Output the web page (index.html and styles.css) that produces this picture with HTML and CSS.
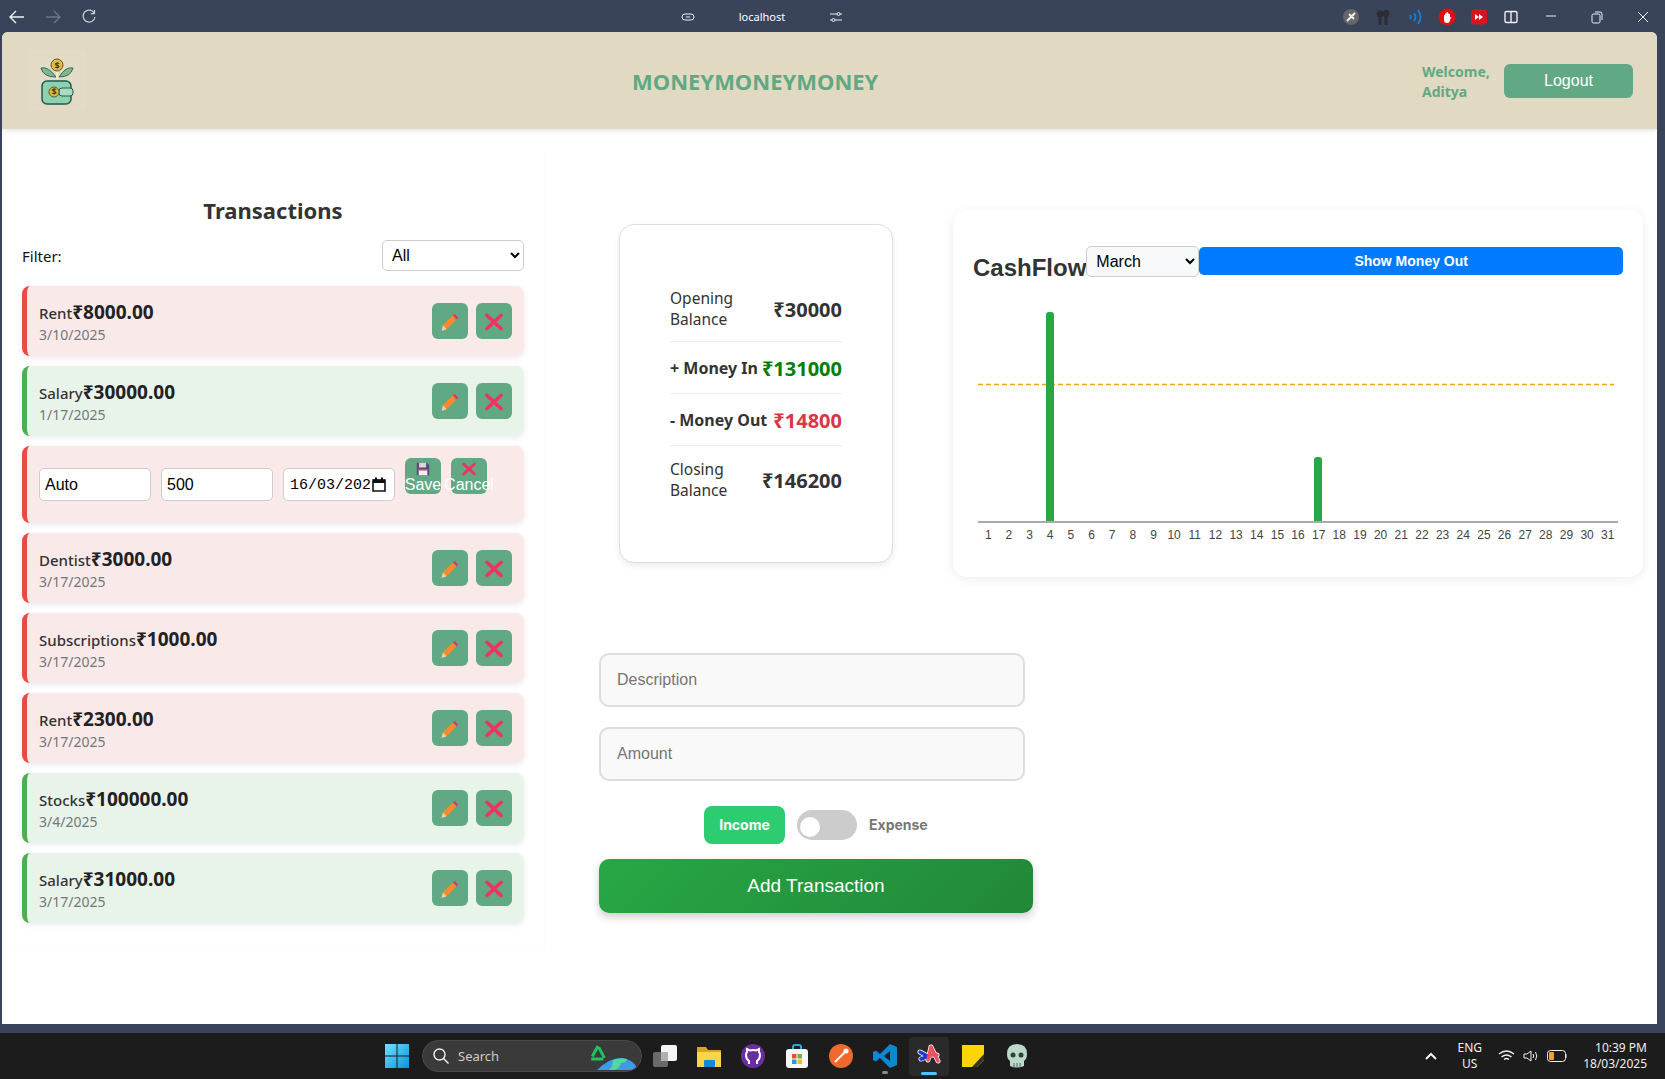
FILE: index.html
```html
<!DOCTYPE html>
<html>
    <head>
        <meta charset="utf-8">
        <title>MONEYMONEYMONEY</title>
        <link rel="stylesheet" href="styles.css">
    </head>
    <body>
        <div class="chrome">
            <div class="nav-btns">
                <svg width="20" height="20" viewBox="0 0 20 20" class="line-icon"><path d="M17 10H3M9 4l-6 6 6 6"/></svg>
                <svg width="20" height="20" viewBox="0 0 20 20" class="line-icon dim"><path d="M3 10h14M11 4l6 6-6 6"/></svg>
                <svg width="20" height="20" viewBox="0 0 20 20" class="line-icon soft"><path d="M15.500 6.500A6 6 0 1 0 16 10M15.500 3v3.700h-3.700"/></svg>
            </div>
            <div class="address">
                <svg width="16" height="16" viewBox="0 0 16 16" class="line-icon thin"><rect x="2" y="5" width="12" height="6" rx="3"/><path d="M6 8h4"/></svg>
                <span class="address-text">localhost</span>
                <svg width="16" height="16" viewBox="0 0 16 16" class="line-icon thin"><path d="M2 5h7M12 5h2M2 11h2M7 11h7"/><circle cx="10.500" cy="5" r="1.500"/><circle cx="5.500" cy="11" r="1.500"/></svg>
            </div>
            <div class="ext-icons">
                <svg width="18" height="18" viewBox="0 0 18 18"><circle cx="9" cy="9" r="8" fill="#666"/><path d="M5 13l8-8M7 6l5 5" stroke="#eee" stroke-width="2"/></svg>
                <svg width="18" height="18" viewBox="0 0 18 18"><circle cx="6" cy="6" r="3.500" fill="#2a2d33"/><circle cx="12" cy="5.500" r="3.500" fill="#2a2d33"/><rect x="4.500" y="8" width="3" height="9" fill="#2a2d33"/><rect x="10.500" y="8" width="3" height="9" fill="#2a2d33"/></svg>
                <svg width="18" height="18" viewBox="0 0 18 18" fill="none" stroke="#0a84e8" stroke-width="1.800"><path d="M4 7q1.500 2 0 4M8 5q3 4 0 8M12 2q5 7 0 14"/></svg>
                <svg width="18" height="18" viewBox="0 0 18 18"><circle cx="9" cy="9" r="8.500" fill="#e01010"/><path d="M6 7v5q0 3 3 3t3-3l1.500-3-1.500.5V6h-1v-.5H10V4H8.500v1.500H7V7z" fill="#fff"/></svg>
                <svg width="18" height="18" viewBox="0 0 18 18"><rect x="1" y="1.500" width="16" height="15" rx="3" fill="#d8141c"/><path d="M5 6l4 3-4 3zM9 6l4 3-4 3z" fill="#fff"/></svg>
                <svg width="18" height="18" viewBox="0 0 18 18" class="line-icon"><rect x="3" y="3.500" width="12" height="11" rx="1.500"/><path d="M9 3.500v11"/></svg>
            </div>
            <div class="window-btns">
                <svg width="14" height="14" viewBox="0 0 14 14" class="line-icon thin"><path d="M2 6h10"/></svg>
                <svg width="14" height="14" viewBox="0 0 14 14" class="line-icon thin"><rect x="2" y="4" width="8" height="9" rx="1.500"/><path d="M5 2h5q2 0 2 2v6"/></svg>
                <svg width="14" height="14" viewBox="0 0 14 14" class="line-icon thin"><path d="M2 2l10 10M12 2L2 12"/></svg>
            </div>
        </div>

        <div class="page">
            <header class="app-header">
                <div class="logo">
                    <svg width="36" height="52" viewBox="0 0 36 52">
                        <path d="M17 22Q9 11 2 13q2 9 15 9z" fill="#7fb98f" stroke="#2f6b5b" stroke-width="1"/>
                        <path d="M20 22Q27 11 34 13q-2 9-14 9z" fill="#7fb98f" stroke="#2f6b5b" stroke-width="1"/>
                        <path d="M18 14v10" stroke="#f3ead2" stroke-width="2"/>
                        <circle cx="18" cy="10" r="6" fill="#e6b93f" stroke="#5a5a3a"/>
                        <text x="18" y="13.500" class="logo-dollar">$</text>
                        <rect x="3" y="26" width="29" height="23" rx="5" fill="#8ed1ae" stroke="#1f5a52" stroke-width="1.500"/>
                        <rect x="20" y="33" width="14" height="8" rx="3" fill="#a9dcc0" stroke="#1f5a52"/>
                        <circle cx="15" cy="37" r="5" fill="#e6b93f" stroke="#5a5a3a"/>
                        <text x="15" y="40" class="logo-dollar">$</text>
                    </svg>
                </div>
                <h1 class="app-title">MONEYMONEYMONEY</h1>
                <div class="user-box">
                    <span class="welcome">Welcome, Aditya</span>
                    <button class="logout-btn" type="button">Logout</button>
                </div>
            </header>

            <main class="main">
                <section class="tx-panel">
                    <h2 class="tx-heading">Transactions</h2>
                    <div class="filter-row">
                        <label>Filter:</label>
                        <select class="filter-select"><option>All</option></select>
                    </div>
                    <ul class="tx-list">
                        <li class="tx expense">
                            <div class="tx-info">
                                <div class="tx-top"><span class="tx-name">Rent</span><span class="tx-amount">₹8000.00</span></div>
                                <div class="tx-date">3/10/2025</div>
                            </div>
                            <div class="tx-actions">
                                <button class="icon-btn" type="button"><svg width="20" height="20"><use href="#pencil"/></svg></button>
                                <button class="icon-btn" type="button"><svg width="18" height="18"><use href="#cross"/></svg></button>
                            </div>
                        </li>
                        <li class="tx income">
                            <div class="tx-info">
                                <div class="tx-top"><span class="tx-name">Salary</span><span class="tx-amount">₹30000.00</span></div>
                                <div class="tx-date">1/17/2025</div>
                            </div>
                            <div class="tx-actions">
                                <button class="icon-btn" type="button"><svg width="20" height="20"><use href="#pencil"/></svg></button>
                                <button class="icon-btn" type="button"><svg width="18" height="18"><use href="#cross"/></svg></button>
                            </div>
                        </li>
                        <li class="tx expense editing">
                            <input class="edit-input" type="text" value="Auto">
                            <input class="edit-input" type="text" value="500">
                            <div class="edit-input date-input"><span class="date-text">16/03/2025</span><svg width="14" height="15" viewBox="0 0 14 15"><path d="M1 3h12v11H1z" fill="none" stroke="#111" stroke-width="1.600"/><path d="M1 2.500h12V6H1zM3 .5h2v2H3zM9 .5h2v2H9z" fill="#111"/></svg></div>
                            <button class="icon-btn stacked" type="button"><svg width="18" height="18" viewBox="0 0 18 18"><path d="M1 1h13l3 3v13H1z" fill="#5b4a80"/><rect x="4" y="1" width="9" height="6" fill="#d9d6e0"/><rect x="3.500" y="9" width="11" height="8" fill="#f2f2f2"/><rect x="3.500" y="9" width="11" height="2" fill="#f03a5f"/></svg><span>Save</span></button>
                            <button class="icon-btn stacked" type="button"><svg width="18" height="18"><use href="#cross"/></svg><span>Cancel</span></button>
                        </li>
                        <li class="tx expense">
                            <div class="tx-info">
                                <div class="tx-top"><span class="tx-name">Dentist</span><span class="tx-amount">₹3000.00</span></div>
                                <div class="tx-date">3/17/2025</div>
                            </div>
                            <div class="tx-actions">
                                <button class="icon-btn" type="button"><svg width="20" height="20"><use href="#pencil"/></svg></button>
                                <button class="icon-btn" type="button"><svg width="18" height="18"><use href="#cross"/></svg></button>
                            </div>
                        </li>
                        <li class="tx expense">
                            <div class="tx-info">
                                <div class="tx-top"><span class="tx-name">Subscriptions</span><span class="tx-amount">₹1000.00</span></div>
                                <div class="tx-date">3/17/2025</div>
                            </div>
                            <div class="tx-actions">
                                <button class="icon-btn" type="button"><svg width="20" height="20"><use href="#pencil"/></svg></button>
                                <button class="icon-btn" type="button"><svg width="18" height="18"><use href="#cross"/></svg></button>
                            </div>
                        </li>
                        <li class="tx expense">
                            <div class="tx-info">
                                <div class="tx-top"><span class="tx-name">Rent</span><span class="tx-amount">₹2300.00</span></div>
                                <div class="tx-date">3/17/2025</div>
                            </div>
                            <div class="tx-actions">
                                <button class="icon-btn" type="button"><svg width="20" height="20"><use href="#pencil"/></svg></button>
                                <button class="icon-btn" type="button"><svg width="18" height="18"><use href="#cross"/></svg></button>
                            </div>
                        </li>
                        <li class="tx income">
                            <div class="tx-info">
                                <div class="tx-top"><span class="tx-name">Stocks</span><span class="tx-amount">₹100000.00</span></div>
                                <div class="tx-date">3/4/2025</div>
                            </div>
                            <div class="tx-actions">
                                <button class="icon-btn" type="button"><svg width="20" height="20"><use href="#pencil"/></svg></button>
                                <button class="icon-btn" type="button"><svg width="18" height="18"><use href="#cross"/></svg></button>
                            </div>
                        </li>
                        <li class="tx income">
                            <div class="tx-info">
                                <div class="tx-top"><span class="tx-name">Salary</span><span class="tx-amount">₹31000.00</span></div>
                                <div class="tx-date">3/17/2025</div>
                            </div>
                            <div class="tx-actions">
                                <button class="icon-btn" type="button"><svg width="20" height="20"><use href="#pencil"/></svg></button>
                                <button class="icon-btn" type="button"><svg width="18" height="18"><use href="#cross"/></svg></button>
                            </div>
                        </li>
                    </ul>
                </section>

                <section class="dash">
                    <div class="summary">
                        <div class="sum-row"><span class="sum-label">Opening Balance</span><span class="sum-value">₹30000</span></div>
                        <div class="sum-row"><span class="sum-label strong">+ Money In</span><span class="sum-value green">₹131000</span></div>
                        <div class="sum-row"><span class="sum-label strong">- Money Out</span><span class="sum-value red">₹14800</span></div>
                        <div class="sum-row"><span class="sum-label">Closing Balance</span><span class="sum-value">₹146200</span></div>
                    </div>

                    <div class="cash-card">
                        <div class="cash-head">
                            <h3 class="cash-title">CashFlow</h3>
                            <select class="month-select"><option>March</option></select>
                            <button class="show-btn" type="button">Show Money Out</button>
                        </div>
                        <svg class="chart" width="650" height="250" viewBox="0 0 650 250">
                            <line x1="5" y1="84.500" x2="641" y2="84.500" stroke="#ffa000" stroke-width="1.500" stroke-dasharray="5 3"/>
                            <path d="M73 222V15a3 3 0 0 1 3-3h2a3 3 0 0 1 3 3v207z" fill="#28a745"/>
                            <path d="M341 222V160a3 3 0 0 1 3-3h2a3 3 0 0 1 3 3v62z" fill="#28a745"/>
                            <rect x="5" y="221" width="640" height="2" fill="#aaa"/>
                            <g class="chart-labels">
                                <text x="15.300" y="239">1</text><text x="35.900" y="239">2</text><text x="56.600" y="239">3</text><text x="77.200" y="239">4</text><text x="97.900" y="239">5</text><text x="118.500" y="239">6</text><text x="139.200" y="239">7</text><text x="159.800" y="239">8</text><text x="180.500" y="239">9</text><text x="201.100" y="239">10</text><text x="221.800" y="239">11</text><text x="242.400" y="239">12</text><text x="263.100" y="239">13</text><text x="283.700" y="239">14</text><text x="304.400" y="239">15</text><text x="325" y="239">16</text><text x="345.700" y="239">17</text><text x="366.300" y="239">18</text><text x="387" y="239">19</text><text x="407.600" y="239">20</text><text x="428.300" y="239">21</text><text x="448.900" y="239">22</text><text x="469.600" y="239">23</text><text x="490.200" y="239">24</text><text x="510.900" y="239">25</text><text x="531.500" y="239">26</text><text x="552.200" y="239">27</text><text x="572.800" y="239">28</text><text x="593.500" y="239">29</text><text x="614.100" y="239">30</text><text x="634.800" y="239">31</text>
                            </g>
                        </svg>
                    </div>

                    <form class="add-form">
                        <input class="add-input" type="text" placeholder="Description">
                        <input class="add-input" type="text" placeholder="Amount">
                        <div class="type-row">
                            <span class="type-on">Income</span>
                            <span class="toggle"><span class="knob"></span></span>
                            <span class="type-off">Expense</span>
                        </div>
                        <button class="add-btn" type="button">Add Transaction</button>
                    </form>
                </section>
            </main>
        </div>

        <footer class="taskbar">
            <div class="task-center">
                <svg width="24" height="24" viewBox="0 0 24 24"><defs><linearGradient id="win" x1="0" y1="0" x2="1" y2="1"><stop offset="0" stop-color="#6fe0fa"/><stop offset="1" stop-color="#0b94dc"/></linearGradient></defs><path d="M0 0h11.500v11.500H0zM12.500 0H24v11.500H12.500zM0 12.500h11.500V24H0zM12.500 12.500H24V24H12.500z" fill="url(#win)"/></svg>
                <div class="search">
                    <svg width="18" height="18" viewBox="0 0 18 18" class="line-icon"><circle cx="7.500" cy="7.500" r="5.500"/><path d="M11.500 11.500l5 5"/></svg>
                    <span class="search-text">Search</span>
                    <svg class="search-art" width="48" height="26" viewBox="0 0 48 26"><path d="M9 2L2 15h14z" fill="none" stroke="#1ec45f" stroke-width="3" stroke-linejoin="round" stroke-dasharray="12 3"/><path d="M8 26Q20 14 32 14q12 1 16 10l-1 2z" fill="#3f9be8"/><path d="M24 16q8-3 14-1-1 4-6 4-1 5-6 7h-6q4-4 4-10z" fill="#4fd8a0"/></svg>
                </div>
                <svg width="24" height="24" viewBox="0 0 24 24"><rect x="0" y="8" width="15" height="15" rx="2" fill="#6a6a6a"/><rect x="8" y="1" width="16" height="16" rx="2" fill="#f4f4f4"/><rect x="8" y="8" width="7" height="9" fill="#b0b0b0"/></svg>
                <svg width="24" height="24" viewBox="0 0 24 24"><path d="M0 3h9l2 3h13v17H0z" fill="#d9a520"/><path d="M0 8h24v15H0z" fill="#fbd34d"/><rect x="7" y="16" width="11" height="7" rx="1" fill="#1588d8"/></svg>
                <svg width="24" height="24" viewBox="0 0 24 24"><circle cx="12" cy="12" r="12" fill="#6b2ea0"/><path d="M8 20v-3q-3-2-3-6 0-2 1-3V5l3 1.500q3-.8 6 0L18 5v3q1 1 1 3 0 4-3 6v3" fill="none" stroke="#fff" stroke-width="2"/></svg>
                <svg width="24" height="24" viewBox="0 0 24 24"><path d="M8 6V3q0-2 2-2h4q2 0 2 2v3" fill="none" stroke="#29a8e0" stroke-width="2"/><rect x="1" y="5" width="22" height="19" rx="3" fill="#f7f7f7"/><rect x="7" y="10" width="4.500" height="4.500" fill="#e8502a"/><rect x="12.500" y="10" width="4.500" height="4.500" fill="#6cb33f"/><rect x="7" y="15.500" width="4.500" height="4.500" fill="#1a9fe0"/><rect x="12.500" y="15.500" width="4.500" height="4.500" fill="#fbb914"/></svg>
                <svg width="24" height="24" viewBox="0 0 24 24"><circle cx="12" cy="12" r="12" fill="#f0682c"/><path d="M6 18L16 8" stroke="#fff" stroke-width="2"/><circle cx="17" cy="7" r="2.500" fill="#fff"/></svg>
                <div class="vs-slot">
                    <svg width="24" height="24" viewBox="0 0 24 24"><path d="M17 0l7 3v18l-7 3-10-10-4 3.500L0 16v-8l3-1.500L7 10zM17 7l-6 5 6 5z" fill="#0f87d0"/></svg>
                    <span class="vs-dot"></span>
                </div>
                <div class="active-app">
                    <svg width="24" height="20" viewBox="0 0 24 20">
                        <path d="M3 8l9 5M4 15l8-3M14 3l-3 13M14 3l7 14M13 11h7" fill="none" stroke="#fff" stroke-width="5" stroke-linecap="round"/>
                        <path d="M3 8l9 5M4 15l8-3" fill="none" stroke="#1c38d8" stroke-width="3.500" stroke-linecap="round"/>
                        <path d="M14 3l-3 13M14 3l7 14M13 11h7" fill="none" stroke="#f0505e" stroke-width="3.500" stroke-linecap="round"/>
                    </svg>
                    <span class="active-bar"></span>
                </div>
                <svg width="24" height="24" viewBox="0 0 24 24"><path d="M1 1h22v15l-7 7H1z" fill="#fdd500"/><path d="M23 10v6l-7 7h-5z" fill="#3c3420"/></svg>
                <svg class="skull" width="20" height="24" viewBox="0 0 20 24"><path d="M10 0q10 0 10 10 0 5-3 7v5q-7 3-14 0v-5q-3-2-3-7Q0 0 10 0z" fill="#bcd8c8"/><circle cx="6" cy="11" r="2.500" fill="#2c4438"/><circle cx="14" cy="11" r="2.500" fill="#2c4438"/><path d="M7 19v4M10 19v4M13 19v4" stroke="#4a6a58"/></svg>
            </div>
            <div class="tray">
                <svg width="12" height="8" viewBox="0 0 12 8" class="line-icon thick"><path d="M1 7l5-5 5 5"/></svg>
                <div class="lang">ENG<br>US</div>
                <svg width="17" height="14" viewBox="0 0 17 14" class="line-icon"><path d="M1 5q7.500-6 15 0M3.500 8q5-4 10 0M6 10.500q2.500-2 5 0"/></svg>
                <svg width="16" height="14" viewBox="0 0 16 14" class="line-icon thin"><path d="M1 5h3l4-3v10l-4-3H1zM10 5q1.500 2 0 4M12.500 3q2.500 4 0 8"/></svg>
                <svg width="20" height="12" viewBox="0 0 20 12"><rect x=".5" y=".5" width="18" height="11" rx="3" fill="none" stroke="#eee"/><rect x="2" y="2" width="5" height="8" rx="1" fill="#f2a51a"/><path d="M19 4v4" stroke="#eee"/></svg>
                <div class="clock">10:39 PM<br>18/03/2025</div>
            </div>
        </footer>

        <svg class="sprites" width="0" height="0">
            <symbol id="pencil" viewBox="0 0 18 18">
                <path d="M13 1.500l3.500 3.500-1.500 1.500L11.500 3z" fill="#f4305f"/>
                <path d="M11 3.500L14.500 7 6 15.500 2.500 12z" fill="#ff8a2b"/>
                <path d="M2.500 12L6 15.500 1.500 17z" fill="#f6cf9a"/>
            </symbol>
            <symbol id="cross" viewBox="0 0 18 18">
                <path d="M2 2.500l14 13M16 2.500l-14 13" stroke="#f4305f" stroke-width="3.600" stroke-linecap="round" fill="none"/>
            </symbol>
        </svg>
    </body>
</html>
```

FILE: styles.css
```css
*{
    box-sizing: border-box;
}
html,body{
    margin: 0;
    height: 1079px;
    overflow: hidden;
}
body{
    background-color: #39445a;
    display: flex;
    flex-direction: column;
    font-family: "Noto Sans", "Open Sans", sans-serif;
}
.line-icon{
    fill: none;
    stroke: #eef0f3;
    stroke-width: 1.4;
}
.line-icon.thin{
    stroke-width: 1;
}
.line-icon.thick{
    stroke-width: 2;
}
.line-icon.soft{
    stroke: #c9ced6;
    stroke-width: 1.2;
}
.line-icon.dim{
    stroke: #6d7686;
}

/* browser bar */
.chrome{
    height: 32px;
    flex: none;
    display: flex;
    align-items: center;
    padding: 1px 0 0 7px;
    color: #fff;
}
.nav-btns{
    display: flex;
    gap: 16px;
}
.address{
    display: flex;
    align-items: center;
    margin-left: 581px;
    width: 164px;
    justify-content: space-between;
}
.address-text{
    font-size: 11px;
}
.ext-icons{
    display: flex;
    gap: 14px;
    margin-left: 498px;
}
.window-btns{
    display: flex;
    gap: 32px;
    margin-left: 24px;
}

/* page */
.page{
    height: 992px;
    flex: none;
    margin: 0 8px 0 2px;
    background-color: #fff;
    border-radius: 6px 6px 0 0;
    overflow: hidden;
}
.app-header{
    height: 97px;
    background-color: #e1d9c1;
    box-shadow: 0 2px 5px rgba(0,0,0,0.1);
    display: flex;
    align-items: center;
    justify-content: space-between;
    padding: 0 24px 0 26px;
    position: relative;
}
.logo{
    width: 58px;
    height: 60px;
    margin-top: -2px;
    background-color: #e4dbc6;
    display: flex;
    align-items: center;
    justify-content: center;
    padding-top: 2px;
}
.logo-dollar{
    font-size: 9px;
    font-weight: 700;
    text-anchor: middle;
    fill: #3c3c20;
}
.app-title{
    margin: 0;
    font-size: 22px;
    font-weight: 700;
    color: #60a984;
    width: 244px;
    white-space: nowrap;
}
.user-box{
    display: flex;
    align-items: center;
    gap: 16px;
    margin-top: 1px;
}
.welcome{
    width: 66px;
    margin-top: 2px;
    font-size: 14px;
    font-weight: 700;
    line-height: 20px;
    color: #60a984;
}
.logout-btn{
    width: 129px;
    height: 34px;
    border: none;
    border-radius: 6px;
    background-color: #60a984;
    color: #fff;
    font-family: "Liberation Sans", sans-serif;
    font-size: 16px;
}
.main{
    display: flex;
    align-items: flex-start;
}

/* transactions */
.tx-panel{
    width: 542px;
    margin-top: 20px;
    height: 802px;
    padding: 45px 20px 0;
    box-shadow: 0 0 2px rgba(0,0,0,0.03);
}
.tx-heading{
    margin: 0;
    font-size: 22px;
    line-height: 32px;
    font-weight: 700;
    color: #333;
    text-align: center;
}
.filter-row{
    display: flex;
    justify-content: space-between;
    align-items: center;
    margin: 14px 0 15px;
    font-size: 15px;
    color: #111;
}
.filter-select{
    width: 142px;
    height: 31px;
    padding-left: 5px;
    border: 1px solid #ccc;
    border-radius: 5px;
    background-color: #fff;
    font-family: "Liberation Sans", sans-serif;
    font-size: 16px;
}
.tx-list{
    list-style: none;
    margin: 0;
    padding: 0;
    display: flex;
    flex-direction: column;
    gap: 10px;
}
.tx{
    height: 70px;
    display: flex;
    align-items: center;
    justify-content: space-between;
    padding: 0 12px;
    border-radius: 8px;
    border-left: 5px solid;
    box-shadow: 0 2px 6px rgba(0,0,0,0.08);
}
.expense{
    background-color: #fae9e9;
    border-left-color: #e74c3c;
}
.income{
    background-color: #e8f3ea;
    border-left-color: #4caf50;
}
.tx-top{
    display: flex;
    align-items: baseline;
    color: #333;
    padding-top: 1px;
}
.tx-name{
    font-size: 15px;
    font-weight: 500;
}
.tx-amount{
    font-size: 19px;
    font-weight: 700;
    color: #222;
}
.tx-date{
    font-size: 14px;
    color: #777;
}
.tx-actions{
    display: flex;
    gap: 8px;
}
.icon-btn{
    width: 36px;
    height: 36px;
    padding: 2px 0 0;
    border: none;
    border-radius: 6px;
    background-color: #60a984;
    display: flex;
    align-items: center;
    justify-content: center;
}
.editing{
    height: 77px;
    align-items: flex-start;
    justify-content: flex-start;
    gap: 10px;
    padding-top: 12px;
}
.edit-input{
    width: 112px;
    height: 33px;
    margin-top: 10px;
    padding: 0 5px;
    border: 1px solid #ccc;
    border-radius: 5px;
    background-color: #fff;
    font-family: "Liberation Sans", sans-serif;
    font-size: 16px;
    color: #000;
}
.date-input{
    display: flex;
    align-items: center;
    gap: 2px;
    padding: 0 8px 0 6px;
    overflow: hidden;
}
.date-text{
    flex: 1;
    overflow: hidden;
    white-space: nowrap;
    font-family: "Liberation Mono", monospace;
    font-size: 15px;
    padding-top: 2px;
}
.date-input svg{
    flex: none;
}
.stacked{
    flex-direction: column;
    justify-content: flex-start;
    color: #fff;
    font-family: "Liberation Sans", sans-serif;
    font-size: 16px;
    line-height: 18px;
    padding-top: 4px;
    white-space: nowrap;
}

/* summary and chart */
.dash{
    margin-left: 55px;
    padding-top: 81px;
    display: grid;
    grid-template-columns: 354px 690px;
    align-items: start;
}
.summary{
    margin: 14px 0 0 20px;
    width: 274px;
    height: 339px;
    padding: 50px;
    border: 1px solid #ddd;
    border-radius: 15px;
    background-color: #fff;
    box-shadow: 0 3px 6px rgba(0,0,0,0.08);
}
.sum-row{
    display: flex;
    align-items: center;
    justify-content: space-between;
    padding: 13px 0 11px;
    border-bottom: 1px solid #eee;
    color: #333;
    font-size: 15.5px;
    line-height: 21px;
}
.sum-row:nth-child(2),
.sum-row:nth-child(3){
    line-height: 27px;
}
.sum-row:last-child{
    border-bottom: none;
}
.sum-label{
    max-width: 76px;
}
.sum-label.strong{
    max-width: none;
    font-size: 16px;
    font-weight: 700;
    white-space: nowrap;
}
.sum-value{
    font-size: 20px;
    font-weight: 700;
    color: #333;
}
.green{
    color: #008000;
}
.red{
    color: #dc3545;
}
.cash-card{
    width: 690px;
    padding: 36px 20px 27px;
    border-radius: 14px;
    background-color: #fff;
    box-shadow: 0 2px 12px rgba(0,0,0,0.08);
}
.cash-head{
    display: flex;
    align-items: flex-start;
    height: 35px;
}
.cash-title{
    margin: 8px 0 0;
    font-family: "Liberation Sans", sans-serif;
    font-size: 24px;
    line-height: 27px;
    font-weight: 700;
    color: #333;
}
.month-select{
    width: 113px;
    height: 31px;
    padding-left: 5px;
    border: 1px solid #ccc;
    border-radius: 5px;
    background-color: #f8f9fa;
    font-family: "Liberation Sans", sans-serif;
    font-size: 16px;
}
.show-btn{
    flex: 1;
    height: 28px;
    margin-top: 1px;
    border: none;
    border-radius: 5px;
    background-color: #007bff;
    color: #fff;
    font-family: "Liberation Sans", sans-serif;
    font-size: 14px;
    font-weight: 700;
}
.chart{
    display: block;
    margin-top: 19px;
}
.chart-labels text{
    font-family: "Liberation Sans", sans-serif;
    font-size: 12px;
    fill: #444;
    text-anchor: middle;
}

/* add form */
.add-form{
    grid-column: 1 / 3;
    margin-top: 76px;
    width: 434px;
    display: flex;
    flex-direction: column;
}
.add-input{
    width: 426px;
    height: 54px;
    margin-bottom: 20px;
    padding: 0 16px;
    border: 2px solid #ddd;
    border-radius: 10px;
    background-color: #f9f9f9;
    font-family: "Liberation Sans", sans-serif;
    font-size: 16px;
}
.add-input::placeholder{
    color: #757575;
}
.type-row{
    display: flex;
    align-items: center;
    margin: 5px 0 15px 105px;
    height: 38px;
    font-family: Inter, sans-serif;
    font-size: 14px;
    font-weight: 700;
}
.type-on{
    width: 81px;
    height: 38px;
    line-height: 38px;
    text-align: center;
    border-radius: 8px;
    background-color: #2ecc71;
    color: #fff;
}
.toggle{
    width: 60px;
    height: 30px;
    margin: 0 12px;
    padding: 7px 0 0 3px;
    border-radius: 15px;
    background-color: #ccc;
}
.knob{
    display: block;
    width: 20px;
    height: 20px;
    border-radius: 50%;
    background-color: #fff;
}
.type-off{
    margin-top: -2px;
    color: #777;
}
.add-btn{
    width: 434px;
    height: 54px;
    border: none;
    border-radius: 10px;
    background: linear-gradient(135deg, #28a745, #218838);
    box-shadow: 0 4px 8px rgba(0,0,0,0.2);
    color: #fff;
    font-family: "Liberation Sans", sans-serif;
    font-size: 19px;
}

/* windows taskbar */
.taskbar{
    margin-top: 9px;
    height: 46px;
    flex: none;
    background-color: #1c1c1c;
    display: flex;
    align-items: center;
    justify-content: space-between;
    padding: 0 18px 0 385px;
    color: #eee;
}
.task-center{
    display: flex;
    align-items: center;
    gap: 20px;
}
.search{
    width: 220px;
    height: 32px;
    margin: 0 -9px 0 -7px;
    padding-left: 9px;
    display: flex;
    align-items: center;
    gap: 8px;
    border-radius: 16px;
    border: 1px solid #4a4a4a;
    background-color: #3a3a3a;
    position: relative;
    overflow: hidden;
}
.search-text{
    font-size: 13px;
    color: #ccc;
}
.search-art{
    position: absolute;
    right: 4px;
    bottom: 1px;
}
.vs-slot{
    position: relative;
    display: flex;
}
.vs-dot{
    position: absolute;
    left: 9px;
    bottom: -6px;
    width: 6px;
    height: 3px;
    border-radius: 2px;
    background-color: #8a8a8a;
}
.active-app{
    width: 40px;
    height: 39px;
    margin: 0 -8px;
    padding-bottom: 4px;
    display: flex;
    align-items: center;
    justify-content: center;
    position: relative;
    border-radius: 4px;
    background-color: #2a2a2a;
}
.active-bar{
    position: absolute;
    left: 12px;
    bottom: 1px;
    width: 16px;
    height: 3px;
    border-radius: 2px;
    background-color: #4cc2ff;
}
.skull{
    margin-left: 2px;
}
.tray{
    display: flex;
    align-items: center;
    gap: 8px;
    font-size: 12px;
    line-height: 16px;
}
.lang{
    text-align: center;
    margin: 0 8px 0 12px;
}
.clock{
    text-align: right;
    margin-left: 8px;
    width: 64px;
    white-space: nowrap;
}
.sprites{
    position: absolute;
}
```
